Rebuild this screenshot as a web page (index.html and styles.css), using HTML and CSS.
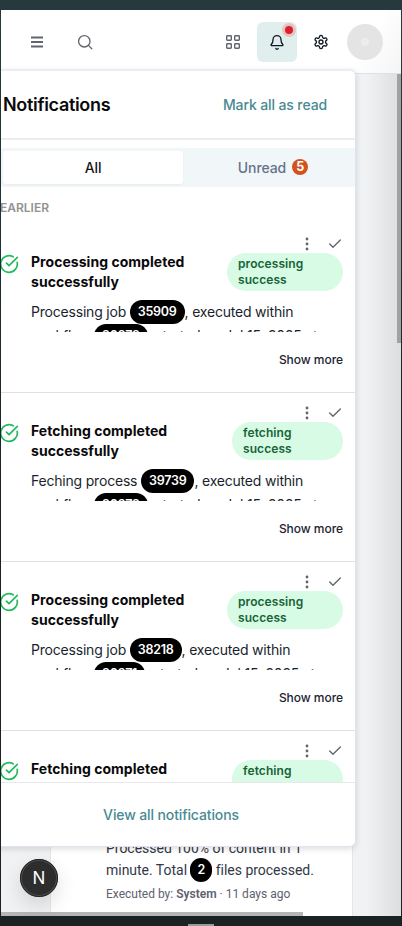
FILE: index.html
```html
<!DOCTYPE html>
<html lang="en">
<head>
<meta charset="utf-8">
<title>Notifications</title>
<link rel="stylesheet" href="styles.css">
</head>
<body>
<svg class="defs" aria-hidden="true">
  <symbol id="check" viewBox="0 0 24 24"><path d="M20 6 9 17l-5-5"/></symbol>
  <symbol id="done" viewBox="0 0 24 24"><path d="M21.8 10A10 10 0 1 1 17 3.335M9 11l3 3L22 4"/></symbol>
  <symbol id="dots" viewBox="0 0 16 16"><g fill="currentColor" stroke="none"><circle cx="8" cy="3" r="1.4"/><circle cx="8" cy="8" r="1.4"/><circle cx="8" cy="13" r="1.4"/></g></symbol>
</svg>
<div class="screen">
  <header class="topbar">
    <button class="tool muted"><svg width="14" height="14" viewBox="0 0 14 14"><path stroke-width="1.9" stroke-linecap="butt" d="M1 2.500h12M1 7h12M1 11.500h12"/></svg></button>
    <button class="tool muted search"><svg width="16" height="16" viewBox="0 0 16 16"><circle cx="7.300" cy="7.300" r="5.700" stroke-width="1.300"/><path stroke-width="1.300" d="m11.400 11.400 3.400 3.400"/></svg></button>
    <span class="spacer"></span>
    <button class="tool muted"><svg width="16" height="16" viewBox="0 0 16 16" stroke-width="1.400"><rect x="1.700" y="1.700" width="4.600" height="4.600" rx=".7"/><rect x="9.700" y="1.700" width="4.600" height="4.600" rx=".7"/><rect x="1.700" y="9.700" width="4.600" height="4.600" rx=".7"/><rect x="9.700" y="9.700" width="4.600" height="4.600" rx=".7"/></svg></button>
    <button class="tool active"><svg width="16" height="16" viewBox="0 0 24 24" stroke-width="2"><path d="M10.300 21.800a2 2 0 0 0 3.400 0M3.300 15.800A1 1 0 0 0 4 17.500h16a1 1 0 0 0 .7-1.700C19.400 14.400 18 13 18 8.500a6 6 0 0 0-12 0c0 4.500-1.400 5.900-2.700 7.300"/></svg><span class="alert"></span></button>
    <button class="tool gear"><svg width="16" height="16" viewBox="0 0 24 24" stroke-width="2"><path d="M12.200 2h-.4a2 2 0 0 0-2 2v.2a2 2 0 0 1-1 1.700l-.4.300a2 2 0 0 1-2 0l-.2-.1a2 2 0 0 0-2.700.7l-.2.400a2 2 0 0 0 .7 2.700l.2.100a2 2 0 0 1 1 1.700v.5a2 2 0 0 1-1 1.800l-.2.100a2 2 0 0 0-.7 2.700l.2.400a2 2 0 0 0 2.700.7l.2-.1a2 2 0 0 1 2 0l.4.300a2 2 0 0 1 1 1.700v.2a2 2 0 0 0 2 2h.4a2 2 0 0 0 2-2v-.2a2 2 0 0 1 1-1.700l.4-.3a2 2 0 0 1 2 0l.2.100a2 2 0 0 0 2.700-.7l.2-.4a2 2 0 0 0-.7-2.700l-.2-.1a2 2 0 0 1-1-1.700v-.5a2 2 0 0 1 1-1.800l.2-.1a2 2 0 0 0 .7-2.700l-.2-.4a2 2 0 0 0-2.700-.7l-.2.100a2 2 0 0 1-2 0l-.4-.3a2 2 0 0 1-1-1.700V4a2 2 0 0 0-2-2z"/><circle cx="12" cy="12" r="3"/></svg></button>
    <span class="avatar"><i></i></span>
  </header>
  <main class="page">
    <article class="activity">
      <p class="summary">Processed 100% of content in 1<br>minute. Total <b class="pill count">2</b> files processed.</p>
      <p class="meta">Executed by: <b>System</b> · 11 days ago</p>
    </article>
    <span class="vscroll"></span>
    <span class="hscroll"></span>
  </main>
  <section class="panel">
    <div class="panel-head"><h2>Notifications</h2><a>Mark all as read</a></div>
    <div class="tabs"><span class="tab selected">All</span><span class="tab">Unread <b>5</b></span></div>
    <h3>EARLIER</h3>
    <div class="list">
      <article class="item">
        <div class="actions"><svg class="dots"><use href="#dots"/></svg><svg class="tick"><use href="#check"/></svg></div>
        <div class="title"><svg class="status"><use href="#done"/></svg><h4>Processing completed successfully</h4><span class="tag">processing success</span></div>
        <p class="desc">Processing job <b class="pill">35909</b>, executed within<br>workflow <b class="pill">20272</b>, started on Jul 15, 2025 at</p>
        <a class="more">Show more</a>
      </article>
      <article class="item">
        <div class="actions"><svg class="dots"><use href="#dots"/></svg><svg class="tick"><use href="#check"/></svg></div>
        <div class="title"><svg class="status"><use href="#done"/></svg><h4>Fetching completed successfully</h4><span class="tag fetch">fetching success</span></div>
        <p class="desc">Feching process <b class="pill">39739</b>, executed within<br>workflow <b class="pill">20272</b>, started on Jul 15, 2025 at</p>
        <a class="more">Show more</a>
      </article>
      <article class="item">
        <div class="actions"><svg class="dots"><use href="#dots"/></svg><svg class="tick"><use href="#check"/></svg></div>
        <div class="title"><svg class="status"><use href="#done"/></svg><h4>Processing completed successfully</h4><span class="tag">processing success</span></div>
        <p class="desc">Processing job <b class="pill">38218</b>, executed within<br>workflow <b class="pill">20271</b>, started on Jul 15, 2025 at</p>
        <a class="more">Show more</a>
      </article>
      <article class="item">
        <div class="actions"><svg class="dots"><use href="#dots"/></svg><svg class="tick"><use href="#check"/></svg></div>
        <div class="title"><svg class="status"><use href="#done"/></svg><h4>Fetching completed</h4><span class="tag fetch">fetching</span></div>
      </article>
    </div>
    <footer><a>View all notifications</a></footer>
  </section>
  <span class="devtool">N</span>
</div>
<span class="handle"></span>
</body>
</html>
```
FILE: styles.css
```css
* { box-sizing: border-box; }
body {
  margin: 0;
  padding: 10px 1px 0;
  height: 926px;
  overflow: hidden;
  background: linear-gradient(#263a3e 0, #263a3e 10px, #1a2224 500px);
  font-family: Inter, "Liberation Sans", sans-serif;
  font-size: 14px;
  color: #1a1f2e;
}
h2, h3, h4, p { margin: 0; }
svg { display: block; fill: none; stroke: currentColor; stroke-linecap: round; stroke-linejoin: round; }
.defs { display: none; }
.screen {
  position: relative;
  height: 906px;
  overflow: hidden;
  display: flex;
  flex-direction: column;
  background: #f0f2f4;
}
.topbar {
  display: flex;
  align-items: center;
  flex: 0 0 64px;
  padding: 0 18px 0 16px;
  border-bottom: 1px solid #dfe1e8;
  background: linear-gradient(120deg, #fff 88%, #f5f5f5);
}
.tool {
  position: relative;
  display: grid;
  place-items: center;
  width: 40px;
  height: 40px;
  padding: 0;
  border: 0;
  border-radius: 6px;
  background: none;
  color: #111827;
}
.muted { color: #62646e; }
.search { margin-left: 8px; }
.spacer { flex: 1; }
.active { margin-left: 4px; background: #e1eeee; }
.gear { margin-left: 4px; }
.alert {
  position: absolute;
  top: 1px;
  right: 1px;
  width: 14px;
  height: 14px;
  border: 3px solid #e6c5bf;
  border-radius: 50%;
  background: #dc1f31;
}
.avatar {
  display: grid;
  place-items: center;
  width: 36px;
  height: 36px;
  margin-left: 6px;
  border-radius: 50%;
  background: #e4e4e4;
}
.avatar i { width: 8px; height: 8px; border-radius: 50%; background: #ececec; }
.page {
  position: relative;
  flex: 1;
  display: flex;
  align-items: flex-end;
  padding-left: 49px;
  background: linear-gradient(90deg, #f0f2f4 365px, #dcddde);
}
.activity {
  width: 303px;
  height: 780px;
  display: flex;
  flex-direction: column;
  justify-content: flex-end;
  padding: 0 20px 13px 55px;
  border: solid #e4e6ea;
  border-width: 0 1px;
  background: #fff;
  font-family: Roboto, Inter, sans-serif;
}
.summary { line-height: 22px; letter-spacing: -.02px; color: #323847; white-space: nowrap; }
.meta { margin-top: 4px; font-size: 12px; line-height: 18px; color: #5d6170; }
.meta b { font-weight: 600; }
.vscroll { position: absolute; top: 0; right: 0; width: 4px; height: 269px; background: #a0a2a3; }
.hscroll { position: absolute; bottom: 0; left: 0; width: 302px; height: 4px; background: #b5b5b5; }
.panel {
  position: absolute;
  top: 59px;
  left: -12px;
  width: 367px;
  height: 778px;
  display: flex;
  flex-direction: column;
  overflow: hidden;
  border: 1px solid #dfe3ee;
  border-top: 2px solid #e8eef3;
  border-radius: 6px;
  background: #fff;
  box-shadow: 0 2px 6px #0002;
}
.panel-head {
  display: flex;
  align-items: center;
  justify-content: space-between;
  flex: 0 0 69px;
  padding: 0 28px 0 13px;
  border-bottom: 2px solid #ededef;
}
h2 { font-size: 18px; font-weight: 600; letter-spacing: -.32px; color: #0a0a0a; }
a { font-weight: 500; letter-spacing: -.12px; color: #488b91; }
.tabs {
  display: flex;
  flex: 0 0 39px;
  margin-top: 8px;
  padding: 3px 4px 3px 13px;
  background: #f1f6f9;
}
.tab {
  display: flex;
  flex: 0 0 180px;
  align-items: center;
  justify-content: center;
  gap: 6px;
  padding-bottom: 1px;
  font-weight: 500;
  letter-spacing: -.1px;
  color: #64748b;
}
.tab.selected { border-radius: 3px; background: #fff; color: #18181b; box-shadow: 0 1px 2px #0000000d; }
.tab b {
  width: 16px;
  height: 16px;
  border-radius: 50%;
  background: #d3531e;
  color: #fff;
  font-size: 12.5px;
  font-weight: 700;
  line-height: 16px;
  text-align: center;
}
h3 { padding-left: 10px; margin-top: 12px; font-size: 12px; line-height: 18px; font-weight: 600; color: #929292; }
.list { flex: 1; min-height: 0; padding-top: 7px; overflow: hidden; }
.item { height: 169px; padding: 12px 12px 0 9px; border-bottom: 1px solid #dfe0e6; }
.actions { display: flex; align-items: center; justify-content: flex-end; gap: 12px; height: 16px; color: #62646e; }
.dots { width: 16px; height: 16px; }
.tick { width: 16px; height: 16px; stroke-width: 2; }
.title { display: flex; align-items: flex-start; }
.status { flex: none; width: 20px; height: 20px; margin-top: 2px; color: #22ba5e; stroke-width: 2; }
h4 { flex: 1; margin-left: 12px; font-size: 14px; line-height: 20px; font-weight: 700; letter-spacing: .04px; color: #09090b; }
.tag {
  flex: 0 0 116px;
  margin-top: 1px;
  height: 38px;
  padding: 3px 36px 3px 11px;
  border-radius: 19px;
  background: #d7fbe4;
  color: #176337;
  font-size: 12px;
  line-height: 16px;
  font-weight: 600;
  letter-spacing: .08px;
}
.fetch { flex-basis: 111px; }
.desc { height: 32px; margin: 8px 0 0 32px; overflow: hidden; line-height: 24px; letter-spacing: -.2px; white-space: nowrap; }
.pill {
  display: inline-block;
  height: 24px;
  padding: 0 8px;
  border-radius: 12px;
  background: #000;
  color: #fff;
  font-family: Inter, sans-serif;
  font-size: 12.5px;
  line-height: 24px;
  font-weight: 600;
  letter-spacing: -.25px;
  vertical-align: top;
}
.count { margin: -1px 0; padding: 0 7px; letter-spacing: 0; }
.more { display: block; margin-top: 19px; font-size: 12px; line-height: 18px; letter-spacing: -.05px; text-align: right; color: #20222f; }
footer { display: grid; place-items: center; flex: 0 0 64px; border-top: 1px solid #e8e8ea; padding-right: 3px; }
.devtool {
  position: absolute;
  left: 19px;
  bottom: 19px;
  width: 38px;
  height: 38px;
  border: 2px solid #4b4b4b;
  outline: 1px solid #222;
  outline-offset: -1px;
  border-radius: 50%;
  background: #2d2d2d;
  color: #fff;
  font-size: 17px;
  line-height: 34px;
  text-align: center;
  box-shadow: 0 8px 20px #0002;
}
.handle { display: block; width: 26px; height: 2px; margin: 8px auto 0; background: #999; }
```
